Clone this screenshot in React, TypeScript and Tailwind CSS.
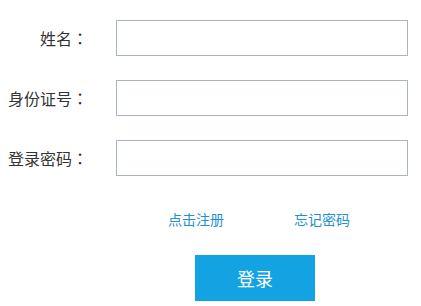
const fields = ["姓名", "身份证号", "登录密码"];

export default function App() {
  return (
    <div className="w-[421px] h-[306px] bg-white font-['Noto_Sans_CJK_SC',sans-serif] overflow-hidden">
      <div className="flex flex-col gap-[24px] pt-[20px]">
        {fields.map((label) => (
          <div key={label} className="flex items-center">
            <span className="w-[88px] text-right text-[16px] leading-[20px] text-[#333]">
              {label}
              <span className="font-['Noto_Sans_CJK_JP',sans-serif]">：</span>
            </span>
            <input
              type={label === "登录密码" ? "password" : "text"}
              className="ml-[28px] w-[292px] h-[36px] border border-[#a9b5c0] outline-none px-2 bg-white"
            />
          </div>
        ))}
      </div>
      <div className="flex pl-[168px] gap-[70px] mt-[33px] text-[14px] leading-[20px] text-[#2590cf]">
        <a href="#">点击注册</a>
        <a href="#">忘记密码</a>
      </div>
      <div className="pl-[195px] mt-[26px]">
        <button className="w-[120px] h-[46px] bg-[#13a3e2] text-white text-[18px]">登录</button>
      </div>
    </div>
  );
}
